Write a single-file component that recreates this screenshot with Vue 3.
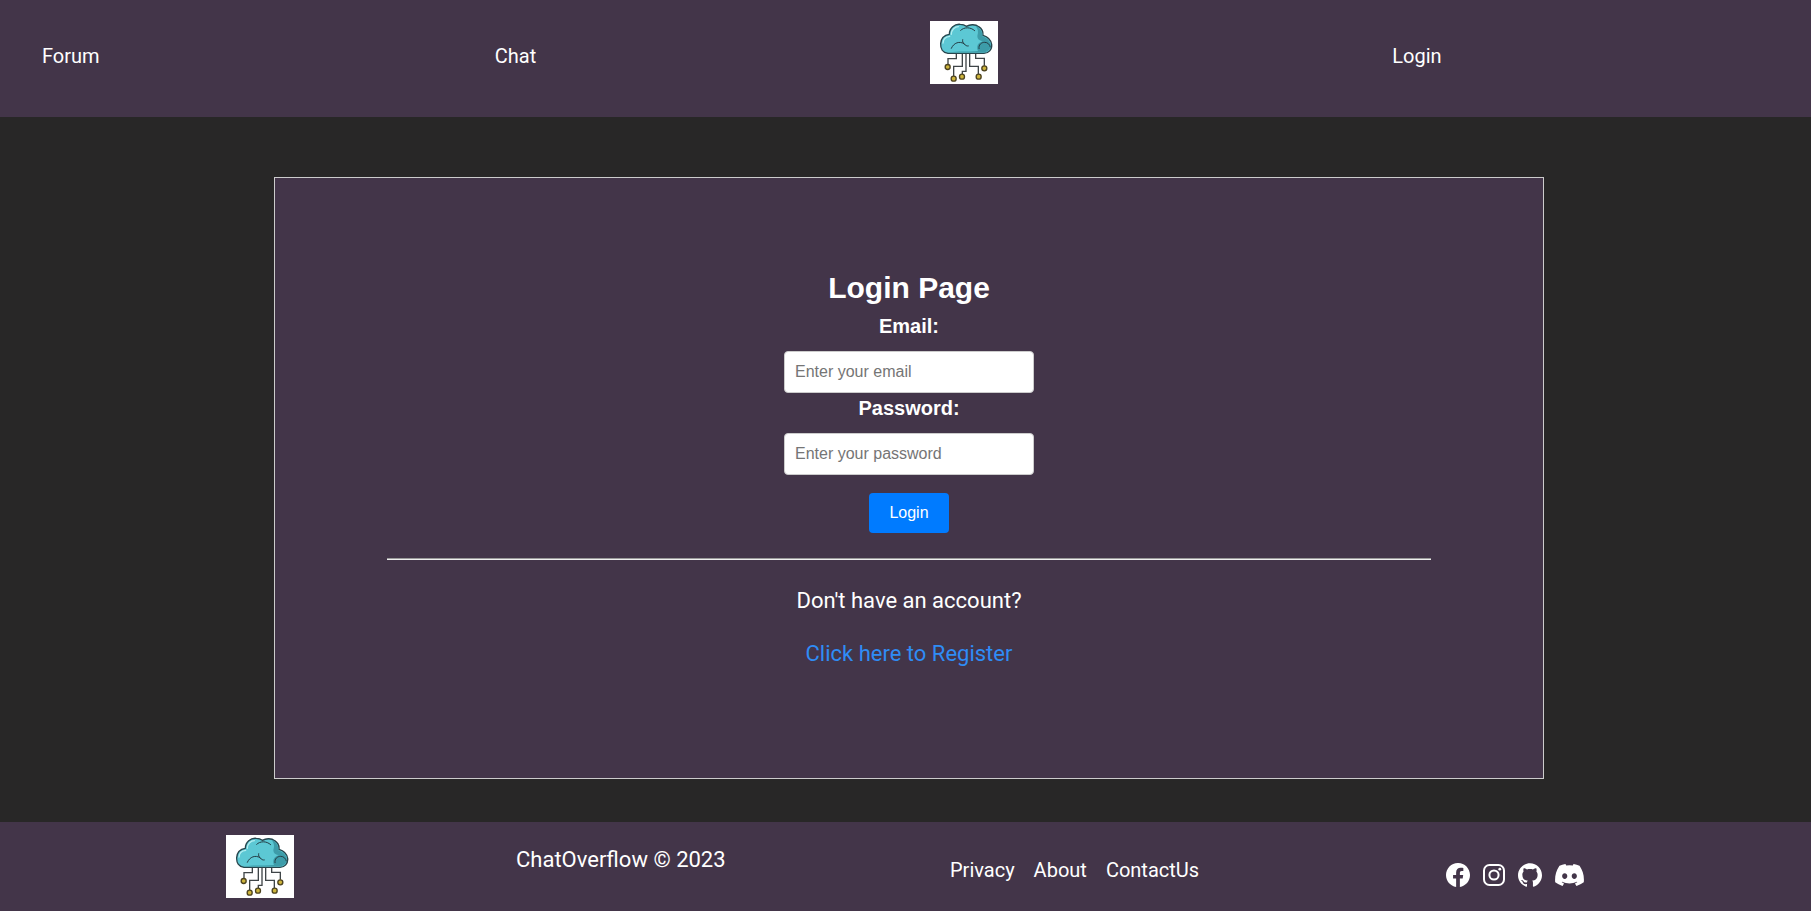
<script setup>
import { ref, h } from 'vue'

const email = ref('')
const password = ref('')

const stroke = { fill: 'none', stroke: '#243d45', 'stroke-width': 3, 'stroke-linecap': 'round' }
const nodes = [[83, 171], [101, 206], [126, 200], [176, 200], [193, 175]]
const wires = [
  'M109 132V146H84V164',
  'M127 132V169H101V198',
  'M138 132V184H127V193',
  'M149 132V169H175V193',
  'M167 132V145H193V167',
]

const BrandLogo = () =>
  h('svg', { viewBox: '30 33 204 189', role: 'img', 'aria-label': 'ChatOverflow' }, [
    h('rect', { x: 30, y: 33, width: 204, height: 189, fill: '#fff' }),
    ...wires.map((d) => h('path', { d, fill: 'none', stroke: '#3f4548', 'stroke-width': 4 })),
    ...nodes.map(([cx, cy]) =>
      h('circle', { cx, cy, r: 7.5, fill: '#cdb43c', stroke: '#4d431f', 'stroke-width': 4 })
    ),
    h('path', {
      d: 'M84 130C68 128 61 115 62 101C63 85 74 75 88 73C88 54 104 41 121 43C128 43 134 45 139 49C151 42 167 43 176 50C187 57 190 67 189 76C203 80 213 91 215 103C217 119 205 130 192 130Z',
      fill: '#5cc8d4', stroke: '#28454c', 'stroke-width': 4, 'stroke-linejoin': 'round',
    }),
    h('path', {
      d: 'M166 47C174 49 183 57 186 68C188 72 187 75 186 78C200 83 209 91 212 103C214 116 203 127 192 127H90C109 123 147 126 174 123C168 111 173 98 188 94C177 91 172 87 172 78C176 65 174 55 166 47Z',
      fill: '#3d9ca9',
    }),
    h('path', { d: 'M69 99C70 88 77 80 89 79M94 73C94 59 105 50 115 50', fill: 'none', stroke: '#b3edf0', 'stroke-width': 4, 'stroke-linecap': 'round' }),
    h('path', { d: 'M122 61C132 51 151 50 164 62', ...stroke }),
    h('path', { d: 'M94 115C101 98 119 92 133 102C136 106 140 109 145 108M133 102C128 99 127 94 128 89', ...stroke }),
    h('path', { d: 'M177 116C175 104 184 97 194 97C203 97 209 103 211 111', ...stroke }),
  ])
</script>

<template>
  <div class="page">
    <header>
      <nav class="top-nav" aria-label="Main">
        <a class="nav-link" href="#forum">Forum</a>
        <a class="nav-link" href="#chat">Chat</a>
        <a class="nav-logo" href="#home"><BrandLogo class="logo" /></a>
        <a class="nav-link nav-login" href="#login">Login</a>
      </nav>
    </header>

    <main>
      <section class="card">
        <form @submit.prevent>
          <h1>Login Page</h1>
          <label for="email">Email:</label>
          <input id="email" v-model="email" type="email" placeholder="Enter your email" />
          <label for="password">Password:</label>
          <input id="password" v-model="password" type="password" placeholder="Enter your password" />
          <button type="submit">Login</button>
        </form>
        <hr />
        <p>Don't have an account?</p>
        <p><a class="register" href="#register">Click here to Register</a></p>
      </section>
    </main>

    <footer>
      <BrandLogo class="logo" />
      <p class="copyright">ChatOverflow © 2023</p>
      <nav class="footer-links" aria-label="Footer">
        <a href="#privacy">Privacy</a>
        <a href="#about">About</a>
        <a href="#contact">ContactUs</a>
      </nav>
      <div class="social">
        <a href="#facebook" aria-label="Facebook">
          <svg width="24" height="24" viewBox="0 0 16 16" fill="currentColor"><path d="M16 8.049c0-4.446-3.582-8.05-8-8.05C3.58 0 0 3.603 0 8.05c0 4.017 2.926 7.347 6.75 7.951v-5.625H4.718V8.05H6.75V6.275c0-2.017 1.195-3.131 3.022-3.131.876 0 1.791.157 1.791.157v1.98h-1.009c-.993 0-1.303.621-1.303 1.258v1.51h2.218l-.354 2.326H9.25V16C13.074 15.396 16 12.066 16 8.049z" /></svg>
        </a>
        <a href="#instagram" aria-label="Instagram">
          <svg width="22" height="22" viewBox="0 0 22 22" fill="none" stroke="currentColor" stroke-width="2"><rect x="1" y="1" width="20" height="20" rx="5.5" /><circle cx="11" cy="11" r="4.6" /><circle cx="16.8" cy="5.2" r="1.4" fill="currentColor" stroke="none" /></svg>
        </a>
        <a href="#github" aria-label="GitHub">
          <svg width="24" height="24" viewBox="0 0 24 24" fill="currentColor"><path d="M12 .297c-6.63 0-12 5.373-12 12 0 5.303 3.438 9.8 8.205 11.385.6.113.82-.258.82-.577 0-.285-.01-1.04-.015-2.04-3.338.724-4.042-1.61-4.042-1.61C4.422 18.07 3.633 17.7 3.633 17.7c-1.087-.744.084-.729.084-.729 1.205.084 1.838 1.236 1.838 1.236 1.07 1.835 2.809 1.305 3.495.998.108-.776.417-1.305.76-1.605-2.665-.3-5.466-1.332-5.466-5.93 0-1.31.465-2.38 1.235-3.22-.135-.303-.54-1.523.105-3.176 0 0 1.005-.322 3.3 1.23.96-.267 1.98-.399 3-.405 1.02.006 2.04.138 3 .405 2.28-1.552 3.285-1.23 3.285-1.23.645 1.653.24 2.873.12 3.176.765.84 1.23 1.91 1.23 3.22 0 4.61-2.805 5.625-5.475 5.92.42.36.81 1.096.81 2.22 0 1.606-.015 2.896-.015 3.286 0 .315.21.69.825.57C20.565 22.092 24 17.592 24 12.297c0-6.627-5.373-12-12-12" /></svg>
        </a>
        <a href="#discord" aria-label="Discord">
          <svg width="29" height="22" viewBox="0 1.9 16 12.2" fill="currentColor"><path d="M13.545 2.907a13.2 13.2 0 0 0-3.257-1.011.05.05 0 0 0-.052.025c-.141.25-.297.577-.406.833a12.2 12.2 0 0 0-3.658 0 8 8 0 0 0-.412-.833.05.05 0 0 0-.052-.025c-1.125.194-2.22.534-3.257 1.011a.04.04 0 0 0-.021.018C.356 6.024-.213 9.047.066 12.032q.003.022.021.037a13.3 13.3 0 0 0 3.995 2.02.05.05 0 0 0 .056-.019q.463-.63.818-1.329a.05.05 0 0 0-.028-.07 9 9 0 0 1-1.248-.595.05.05 0 0 1-.005-.085q.127-.095.248-.195a.05.05 0 0 1 .051-.007c2.619 1.196 5.454 1.196 8.041 0a.05.05 0 0 1 .053.007q.121.1.248.195a.05.05 0 0 1-.004.085 8 8 0 0 1-1.249.594.05.05 0 0 0-.027.071c.24.465.515.909.817 1.329a.05.05 0 0 0 .056.019 13.2 13.2 0 0 0 4.001-2.02.05.05 0 0 0 .021-.037c.334-3.451-.559-6.449-2.366-9.106a.03.03 0 0 0-.02-.019M5.347 10.214c-.789 0-1.438-.724-1.438-1.612s.637-1.613 1.438-1.613c.807 0 1.45.73 1.438 1.613 0 .888-.637 1.612-1.438 1.612m5.316 0c-.788 0-1.438-.724-1.438-1.612s.637-1.613 1.438-1.613c.807 0 1.451.73 1.438 1.613 0 .888-.631 1.612-1.438 1.612" /></svg>
        </a>
      </div>
    </footer>
  </div>
</template>

<style>
body {
  background: #282727;
}
</style>

<style scoped>
.page {
  display: flex;
  flex-direction: column;
  min-height: 100vh;
  color: #fff;
  font-family: Roboto, sans-serif;
  font-size: 22px;
  line-height: 28px;
}

a {
  color: inherit;
  text-decoration: none;
}

header,
footer {
  background: #433549;
}

.top-nav {
  display: grid;
  grid-template-columns: repeat(4, 1fr);
  align-items: start;
  box-sizing: border-box;
  min-height: 117px;
  padding-top: 21px;
}

.nav-link {
  justify-self: start;
  margin: 21px 0 0 42px;
  font-size: 20px;
}

.nav-logo {
  justify-self: start;
  margin-left: 24px;
}

.nav-login {
  margin-left: 34px;
}

.logo {
  display: block;
  width: 68px;
  height: 63px;
}

main {
  flex: 1;
  padding: 60px 267px 43px 274px;
}

.card {
  box-sizing: border-box;
  min-height: 602px;
  padding: 92px 112px 60px;
  border: 1px solid #ccc;
  background: #433549;
  text-align: center;
}

form {
  display: flex;
  flex-direction: column;
  align-items: center;
  font-family: "Liberation Sans", Arial, sans-serif;
}

h1 {
  margin: 0;
  font-size: 30px;
  line-height: 36px;
}

label {
  margin-bottom: 10px;
  font-size: 20px;
  font-weight: bold;
  line-height: 30px;
}

h1 + label {
  margin-top: 5px;
}

input {
  box-sizing: border-box;
  width: 250px;
  height: 42px;
  padding: 10px;
  border: 1px solid #ccc;
  border-radius: 4px;
  background: #fff;
  font: 16px "Liberation Sans", Arial, sans-serif;
}

input::placeholder {
  color: #757575;
}

button {
  height: 40px;
  margin-top: 18px;
  padding: 0 20px;
  border: 0;
  border-radius: 4px;
  background: #007bff;
  color: #fff;
  font: 16px "Liberation Sans", Arial, sans-serif;
}

hr {
  height: 2px;
  margin: 25px 0 27px;
  border: 0;
  background: linear-gradient(#9a9a9a 50%, #eee 50%);
}

p {
  margin: 0 0 25px;
}

.register {
  color: #2f8cf5;
}

footer {
  display: grid;
  grid-template-columns: 290fr 434fr 496fr 365fr;
  align-items: start;
  box-sizing: border-box;
  min-height: 89px;
  padding: 13px 0 13px 226px;
}

.copyright {
  margin: 11px 0 0;
}

.footer-links {
  display: flex;
  gap: 19px;
  margin-top: 21px;
  font-size: 20px;
}

.social {
  display: flex;
  align-items: center;
  gap: 13px;
  margin-top: 28px;
}

.social a,
.social svg {
  display: block;
}
</style>
